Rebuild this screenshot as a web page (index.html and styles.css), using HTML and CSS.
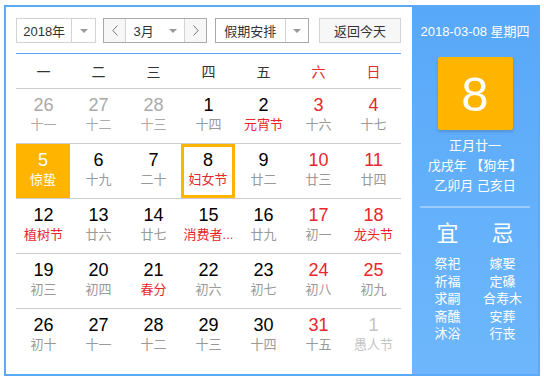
FILE: index.html
```html
<!DOCTYPE html>
<html lang="zh-CN">
<head>
  <meta charset="UTF-8" />
  <meta name="viewport" content="width=device-width, initial-scale=1.0" />
  <title>万年历</title>
  <link rel="stylesheet" href="styles.css">
</head>
<body>
  <div class="calendar">
    <div class="main">
      <div class="toolbar">
        <div class="select year">
          <span class="select-text">2018年</span>
          <span class="select-arrow"><i></i></span>
        </div>
        <div class="month-group">
          <span class="nav-btn">
            <svg width="6" height="11" viewBox="0 0 6 11"><polyline points="5.5,0.5 0.8,5.5 5.5,10.5" fill="none" stroke="#777" stroke-width="1"/></svg>
          </span>
          <div class="select month">
            <span class="select-text">3月</span>
            <span class="select-arrow"><i></i></span>
          </div>
          <span class="nav-btn">
            <svg width="6" height="11" viewBox="0 0 6 11"><polyline points="0.5,0.5 5.2,5.5 0.5,10.5" fill="none" stroke="#777" stroke-width="1"/></svg>
          </span>
        </div>
        <div class="select holiday">
          <span class="select-text">假期安排</span>
          <span class="select-arrow"><i></i></span>
        </div>
        <button class="today-btn">返回今天</button>
      </div>
      <div class="week-head">
        <span>一</span><span>二</span><span>三</span><span>四</span><span>五</span>
        <span class="weekend">六</span><span class="weekend">日</span>
      </div>
      <div class="days" id="days"></div>
    </div>
    <div class="side">
      <div class="side-date">2018-03-08 星期四</div>
      <div class="big-day">8</div>
      <div class="lunar-info">
        <p>正月廿一</p>
        <p>戊戌年 【狗年】</p>
        <p>乙卯月 己亥日</p>
      </div>
      <div class="side-line"></div>
      <div class="advice">
        <div class="advice-col">
          <h3>宜</h3>
          <p>祭祀</p><p>祈福</p><p>求嗣</p><p>斋醮</p><p>沐浴</p>
        </div>
        <div class="advice-col">
          <h3>忌</h3>
          <p>嫁娶</p><p>定磉</p><p>合寿木</p><p>安葬</p><p>行丧</p>
        </div>
      </div>
    </div>
  </div>
  <script>
    // [day, lunar, flags] flags: o=other month, w=weekend, f=festival, s=selected, t=today
    const days = [
      [26, '十一', 'o'], [27, '十二', 'o'], [28, '十三', 'o'], [1, '十四', ''], [2, '元宵节', 'f'], [3, '十六', 'w'], [4, '十七', 'w'],
      [5, '惊蛰', 's'], [6, '十九', ''], [7, '二十', ''], [8, '妇女节', 'ft'], [9, '廿二', ''], [10, '廿三', 'w'], [11, '廿四', 'w'],
      [12, '植树节', 'f'], [13, '廿六', ''], [14, '廿七', ''], [15, '消费者...', 'f'], [16, '廿九', ''], [17, '初一', 'w'], [18, '龙头节', 'wf'],
      [19, '初三', ''], [20, '初四', ''], [21, '春分', 'f'], [22, '初六', ''], [23, '初七', ''], [24, '初八', 'w'], [25, '初九', 'w'],
      [26, '初十', ''], [27, '十一', ''], [28, '十二', ''], [29, '十三', ''], [30, '十四', ''], [31, '十五', 'w'], [1, '愚人节', 'o']
    ];
    const box = document.getElementById('days');
    let html = '';
    for (let r = 0; r < 5; r++) {
      html += '<div class="row">';
      for (let c = 0; c < 7; c++) {
        const [d, l, f] = days[r * 7 + c];
        let cls = 'day';
        if (f.includes('o')) cls += ' other';
        if (f.includes('w')) cls += ' weekend';
        if (f.includes('f')) cls += ' festival';
        if (f.includes('s')) cls += ' selected';
        if (f.includes('t')) cls += ' today';
        html += `<div class="${cls}"><span class="num">${d}</span><span class="lunar">${l}</span></div>`;
      }
      html += '</div>';
    }
    box.innerHTML = html;
  </script>
</body>
</html>
```

FILE: styles.css
```css
body {
  margin: 0;
  font-family: 'Liberation Sans', 'Noto Sans CJK SC', sans-serif;
  color: #333;
  background: #fff;
}
.calendar {
  display: flex;
  width: 532px;
  height: 367px;
  margin: 5px 0 0 4px;
  border: 2px solid #5aaaf9;
}
.main {
  width: 385px;
  padding: 11px 11px 0 10px;
}
.toolbar {
  display: flex;
  align-items: center;
  height: 25px;
  margin-bottom: 10px;
  font-size: 13px;
}
.select {
  display: flex;
  height: 25px;
  box-sizing: border-box;
  border: 1px solid #d3d3d3;
  background: #fff;
}
.select-text {
  display: flex;
  align-items: center;
  justify-content: center;
}
.select-arrow {
  display: flex;
  align-items: center;
  justify-content: center;
  width: 23px;
  border-left: 1px solid #d3d3d3;
}
.select-arrow i {
  border-left: 4px solid transparent;
  border-right: 4px solid transparent;
  border-top: 4px solid #999;
}
.year {
  width: 80px;
}
.year .select-text {
  width: 55px;
}
.month-group {
  display: flex;
  height: 25px;
  box-sizing: border-box;
  margin-left: 7px;
  border: 1px solid #aaa;
}
.nav-btn {
  display: flex;
  align-items: center;
  justify-content: center;
  width: 21px;
  background: #f7f7f7;
}
.month {
  width: 60px;
  height: 23px;
  border-top: 0;
  border-bottom: 0;
  border-color: #d3d3d3;
}
.month .select-text {
  width: 36px;
}
.month .select-arrow {
  border-left: 0;
}
.holiday {
  width: 94px;
  margin-left: 8px;
  border-color: #aaa;
}
.holiday .select-text {
  width: 71px;
}
.today-btn {
  width: 82px;
  height: 25px;
  margin-left: 10px;
  padding: 0;
  border: 1px solid #d3d3d3;
  background: #f7f7f7;
  color: #333;
  font-family: inherit;
  font-size: 13px;
}
.week-head {
  display: grid;
  grid-template-columns: repeat(7, 55px);
  height: 34px;
  border-top: 1px solid #5aaaf9;
  border-bottom: 1px solid #ccc;
  font-size: 14px;
}
.week-head span {
  display: flex;
  align-items: center;
  justify-content: center;
}
.week-head .weekend {
  color: #e8262c;
}
.row {
  display: grid;
  grid-template-columns: repeat(7, 55px);
  height: 54px;
  border-bottom: 1px solid #ccc;
}
.row:last-child {
  border-bottom: 0;
}
.day {
  display: flex;
  flex-direction: column;
  align-items: center;
  justify-content: center;
  box-sizing: border-box;
  padding-bottom: 3px;
}
.num {
  font-size: 18px;
  line-height: 21px;
  color: #000;
}
.lunar {
  font-size: 13px;
  line-height: 18px;
  color: #999;
  white-space: nowrap;
}
.day.weekend .num {
  color: #e8262c;
}
.day.festival .lunar {
  color: #e8262c;
}
.day.other .num {
  color: #aaa;
}
.day.other .lunar {
  color: #aaa;
}
.day.other:last-child .num,
.day.other:last-child .lunar {
  color: #c4c4c4;
}
.day.selected {
  background: #ffb400;
  width: 54px;
}
.day.selected .num,
.day.selected .lunar {
  color: #fff;
}
.day.today {
  width: 54px;
  border: 3px solid #ffb400;
}
.side {
  flex: 1;
  display: flex;
  flex-direction: column;
  align-items: center;
  padding-top: 16px;
  background: linear-gradient(#58a8f9, #6eb7fc);
  color: #fff;
  font-size: 13px;
}
.side-date {
  line-height: 18px;
}
.big-day {
  display: flex;
  align-items: center;
  justify-content: center;
  width: 75px;
  height: 73px;
  margin-top: 16px;
  border-radius: 2px;
  background: #ffb400;
  box-shadow: 0 2px 3px rgba(0,0,0,0.15);
  font-size: 49px;
}
.lunar-info {
  margin-top: 6px;
  text-align: center;
}
.lunar-info p {
  margin: 0;
  line-height: 20px;
}
.side-line {
  width: 110px;
  height: 2px;
  margin-top: 10px;
  background: rgba(255,255,255,0.35);
}
.advice {
  display: flex;
  margin-top: 11px;
}
.advice-col {
  width: 55px;
  text-align: center;
}
.advice-col h3 {
  margin: 0 0 6px;
  font-size: 22px;
  font-weight: normal;
  line-height: 30px;
}
.advice-col p {
  margin: 0;
  line-height: 17.5px;
}
```
